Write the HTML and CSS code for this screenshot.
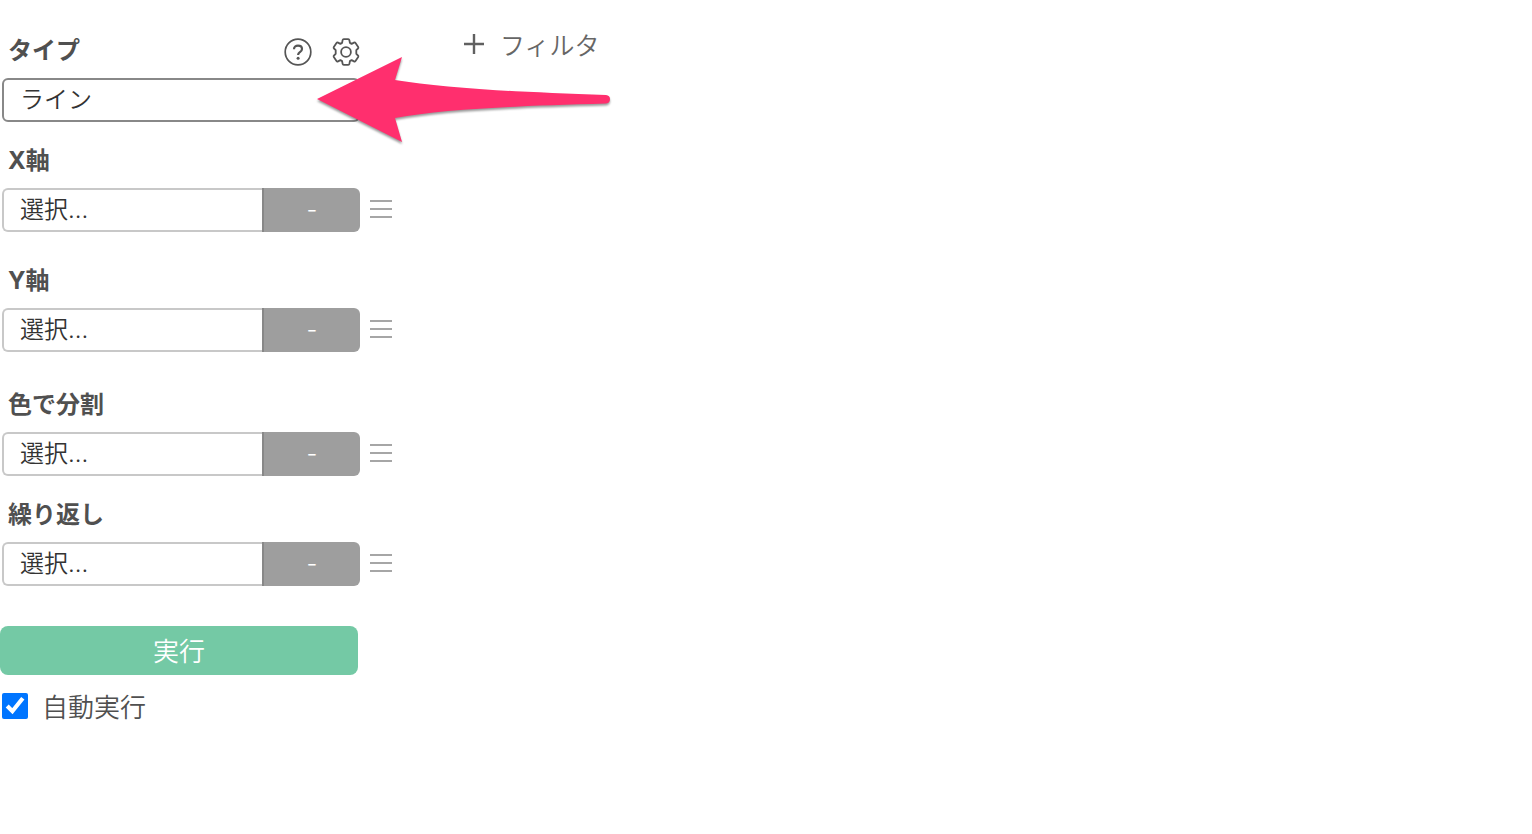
FILE: index.html
```html
<!DOCTYPE html>
<html lang="ja">
<head>
  <meta charset="UTF-8">
  <meta name="viewport" content="width=device-width, initial-scale=1.0">
  <title>チャート</title>
  <link rel="stylesheet" href="styles.css">
</head>
<body>

<div class="chart-editor">

  <!-- Chart settings -->
  <form class="settings">
    <div class="field field-type">
      <div class="field-head">
        <label for="chartType">タイプ</label>
        <div class="head-actions">
          <button type="button" class="icon-btn" aria-label="ヘルプ">
            <svg width="28" height="28" viewBox="0 0 28 28" fill="none" stroke="#555" stroke-width="1.7">
              <circle cx="14" cy="14" r="12.8"/>
              <path d="M10 11.2C10 8.9 11.7 7.6 14 7.6s4 1.3 4 3.3c0 1.7-1 2.400-2.200 3.300C14.600 15 14.100 15.500 14.100 17" stroke-width="2.200"/>
              <circle cx="14.100" cy="20.300" r="1.500" fill="#555" stroke="none"/>
            </svg>
          </button>
          <button type="button" class="icon-btn" aria-label="設定">
            <svg width="28" height="28" viewBox="0 0 28 28" fill="none" stroke="#555" stroke-width="1.8" stroke-linejoin="round">
              <path d="M11.800 1.200H16.200Q17.200 1.200 17.400 2.200L17.900 4.900L19.600 5.900L22 4.600Q22.900 4.100 23.500 5L26.200 9Q26.700 9.900 26 10.500L24.300 12.200V15.800L26 17.500Q26.700 18.100 26.200 19L23.500 23Q22.900 23.900 22 23.400L19.600 22.100L17.900 23.100L17.400 25.800Q17.200 26.800 16.200 26.800H11.800Q10.800 26.800 10.600 25.800L10.100 23.100L8.400 22.100L6 23.400Q5.100 23.900 4.500 23L1.800 19Q1.300 18.100 2 17.500L3.700 15.800V12.200L2 10.500Q1.300 9.900 1.800 9L4.500 5Q5.100 4.100 6 4.600L8.400 5.900L10.100 4.900L10.600 2.200Q10.800 1.200 11.800 1.200Z"/>
              <circle cx="14" cy="14" r="4.900"/>
            </svg>
          </button>
        </div>
      </div>
      <div class="control">
        <select id="chartType" class="column-select type-select">
          <option>ライン</option>
        </select>
      </div>
    </div>

    <div class="field">
      <div class="field-head"><label for="xAxis">X軸</label></div>
      <div class="control">
        <select id="xAxis" class="column-select"><option>選択...</option></select>
        <select class="func-select" aria-label="X軸の関数"><option>-</option></select>
      </div>
      <button type="button" class="menu-btn" aria-label="X軸のメニュー"><span></span><span></span><span></span></button>
    </div>

    <div class="field field-y">
      <div class="field-head"><label for="yAxis">Y軸</label></div>
      <div class="control">
        <select id="yAxis" class="column-select"><option>選択...</option></select>
        <select class="func-select" aria-label="Y軸の関数"><option>-</option></select>
      </div>
      <button type="button" class="menu-btn" aria-label="Y軸のメニュー"><span></span><span></span><span></span></button>
    </div>

    <div class="field">
      <div class="field-head"><label for="colorBy">色で分割</label></div>
      <div class="control">
        <select id="colorBy" class="column-select"><option>選択...</option></select>
        <select class="func-select" aria-label="色の関数"><option>-</option></select>
      </div>
      <button type="button" class="menu-btn" aria-label="色のメニュー"><span></span><span></span><span></span></button>
    </div>

    <div class="field">
      <div class="field-head"><label for="repeatBy">繰り返し</label></div>
      <div class="control">
        <select id="repeatBy" class="column-select"><option>選択...</option></select>
        <select class="func-select" aria-label="繰り返しの関数"><option>-</option></select>
      </div>
      <button type="button" class="menu-btn" aria-label="繰り返しのメニュー"><span></span><span></span><span></span></button>
    </div>

    <button type="button" class="run-btn">実行</button>
    <label class="auto-run" for="autoRun">
      <input type="checkbox" id="autoRun" checked>
      自動実行
    </label>
  </form>

  <!-- Chart area -->
  <main class="chart-area">
    <button type="button" class="filter-btn">
      <svg width="20" height="20" viewBox="0 0 20 20" stroke="#606060" stroke-width="2.4">
        <path d="M10 0V20M0 10H20"/>
      </svg>
      フィルタ
    </button>
  </main>

  <!-- Arrow pointing at the type select -->
  <svg class="arrow" width="300" height="96" viewBox="0 0 300 96" aria-hidden="true">
    <path fill="#ff2f6e" d="M3 47L88 5L81 28C130 36 200 40 292 43Q296 43.500 296 47Q296 51 292 51.500C200 54 130 57 81 66L88 90Z"/>
  </svg>
</div>

</body>
</html>
```

FILE: styles.css
```css
* { box-sizing: border-box; }

body {
  margin: 0;
  background: #fff;
  color: #505050;
  font-family: Inter, "Noto Sans CJK JP", sans-serif;
  font-size: 24px;
  font-weight: 350;
}

button, select, input {
  margin: 0;
  font: inherit;
}

button {
  padding: 0;
  border: none;
  background: none;
  color: inherit;
  cursor: pointer;
}

svg { display: block; }

.chart-editor {
  position: relative;
  display: flex;
  min-height: 100vh;
}

/* Settings column */
.settings {
  flex: 0 0 400px;
  padding-top: 34px;
}

.field {
  display: grid;
  grid-template-columns: 358px auto;
  justify-content: start;
  gap: 10px;
  margin: 0 0 22px 2px;
}

.field:nth-child(2) { margin-bottom: 32px; }
.field-y { margin-bottom: 36px; }

.field-head {
  grid-column: 1;
  display: flex;
  justify-content: space-between;
  align-items: center;
  height: 34px;
  padding-left: 6px;
  font-weight: bold;
  line-height: 34px;
}

.head-actions {
  display: flex;
  gap: 20px;
  padding-top: 2px;
}

.control {
  grid-row: 2;
  display: flex;
  height: 44px;
}

.column-select, .func-select {
  appearance: none;
  outline: none;
  line-height: 36px;
}

.column-select {
  flex: 1;
  min-width: 0;
  padding: 0 16px;
  border: 2px solid #c8c8c8;
  border-right: none;
  border-radius: 6px 0 0 6px;
  background: #fff;
  color: #333;
}

.type-select {
  border: 2px solid #888;
  border-radius: 6px;
}

.func-select {
  width: 98px;
  padding: 0;
  border: none;
  border-left: 2px solid #888;
  border-radius: 0 6px 6px 0;
  background: #9e9e9e;
  color: #fff;
  text-align: center;
  text-align-last: center;
}

.menu-btn {
  grid-row: 2;
  align-self: center;
  display: flex;
  flex-direction: column;
  gap: 6px;
  width: 22px;
  padding-bottom: 2px;
}

.menu-btn span {
  width: 100%;
  height: 2px;
  background: #a6a6a6;
}

.run-btn {
  display: block;
  width: 358px;
  height: 49px;
  padding-bottom: 2px;
  margin-top: 40px;
  border-radius: 8px;
  background: #74c9a5;
  color: #fff;
  font-size: 26px;
}

.auto-run {
  display: flex;
  align-items: center;
  gap: 14px;
  margin: 12px 0 0 2px;
  font-size: 26px;
}

.auto-run input {
  width: 26px;
  height: 26px;
  accent-color: #0075ff;
}

/* Chart area */
.chart-area {
  flex: 1;
  padding: 26px 0 0 64px;
}

.filter-btn {
  display: flex;
  align-items: center;
  gap: 16px;
  color: #666;
  font-size: 25px;
}

.arrow {
  position: absolute;
  top: 52px;
  left: 314px;
  filter: drop-shadow(0 2px 1px rgba(0,0,0,0.4));
  pointer-events: none;
}
```
